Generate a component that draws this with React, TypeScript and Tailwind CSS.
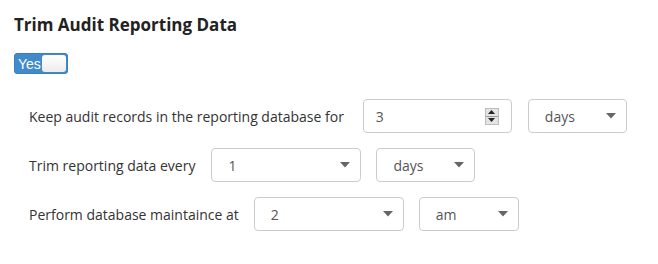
import React from 'react';

const font = { fontFamily: '"Open Sans", "Liberation Sans", sans-serif' };

function Caret() {
  return (
    <svg width="10" height="6" viewBox="0 0 10 6" className="shrink-0">
      <path d="M0 0 L10 0 L5 5.5 Z" fill="#666" />
    </svg>
  );
}

function SelectBox({ value, width }: { value: string; width: string }) {
  return (
    <div className={`${width} h-[34px] flex items-center justify-between pl-4 pr-[10px] border border-[#ccc] rounded-[4px] bg-white text-[14px] text-[#555]`}>
      <span>{value}</span>
      <Caret />
    </div>
  );
}

function NumberBox({ value }: { value: string }) {
  return (
    <div className="w-[149px] h-[34px] flex items-center justify-between pl-[12px] pr-[12px] border border-[#ccc] rounded-[4px] bg-white text-[14px] text-[#555]">
      <span>{value}</span>
      <div className="w-[14px] h-[17px] flex flex-col bg-[#e4e4e4] border border-[#bdbdbd]">
        <div className="flex-1 flex items-center justify-center border-b border-[#9a9a9a]">
          <svg width="7" height="4" viewBox="0 0 7 4"><path d="M0 4 L7 4 L3.5 0 Z" fill="#222" /></svg>
        </div>
        <div className="flex-1 flex items-center justify-center">
          <svg width="7" height="4" viewBox="0 0 7 4"><path d="M0 0 L7 0 L3.5 4 Z" fill="#222" /></svg>
        </div>
      </div>
    </div>
  );
}

export default function App() {
  return (
    <div className="w-[658px] h-[264px] bg-white pl-[14px] pt-[13px]" style={font}>
      <h2 className="text-[17px] leading-6 font-bold text-[#222]">Trim Audit Reporting Data</h2>

      <div className="mt-[16px] w-[54px] h-[21px] flex items-center justify-between bg-[#428bca] border border-[#3a7fc0] rounded-[3px] pl-[3px] pr-[1px]">
        <span className="text-[14px] leading-none text-white" style={{ fontFamily: '"Liberation Sans", Arial, sans-serif' }}>Yes</span>
        <div className="w-[24px] h-[17px] rounded-[3px] bg-gradient-to-b from-white to-[#ececec]" />
      </div>

      <div className="mt-[25px] pl-[15px] flex flex-col gap-[15px] text-[14px] text-[#333]">
        <div className="flex items-center">
          <span className="mr-[19px]">Keep audit records in the reporting database for</span>
          <NumberBox value="3" />
          <div className="ml-[16px]"><SelectBox value="days" width="w-[99px]" /></div>
        </div>
        <div className="flex items-center">
          <span className="mr-[16px]">Trim reporting data every</span>
          <SelectBox value="1" width="w-[150px]" />
          <div className="ml-[15px]"><SelectBox value="days" width="w-[99px]" /></div>
        </div>
        <div className="flex items-center">
          <span className="mr-[15px]">Perform database maintaince at</span>
          <SelectBox value="2" width="w-[150px]" />
          <div className="ml-[15px]"><SelectBox value="am" width="w-[100px]" /></div>
        </div>
      </div>
    </div>
  );
}
